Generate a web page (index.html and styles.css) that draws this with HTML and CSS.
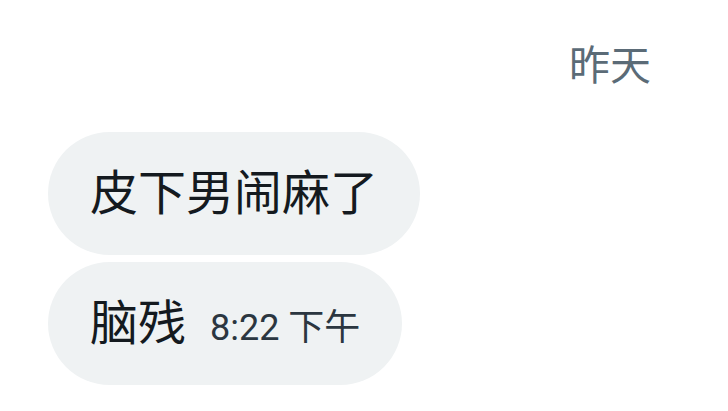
FILE: index.html
```html
<!DOCTYPE html>
<html>

<head>
    <title>聊天</title>
    <link rel="stylesheet" href="styles.css">
</head>

<body>
    <div class="chat">
        <div class="day">昨天</div>

        <div class="messages">
            <div class="bubble">
                <span class="text">皮下男闹麻了</span>
            </div>
            <div class="bubble">
                <span class="text">脑残</span>
                <span class="time">8:22 下午</span>
            </div>
        </div>
    </div>
</body>

</html>
```

FILE: styles.css
```css
body {
    margin: 0;
    background-color: #ffffff;
    font-family: Roboto, "Noto Sans CJK SC", sans-serif;
}

.chat {
    display: flex;
    flex-direction: column;
    padding: 40px 0 0 48px;
}

.day {
    align-self: flex-end;
    margin-right: 77px;
    font-size: 41px;
    line-height: 52px;
    color: #5b6b77;
}

.messages {
    display: flex;
    flex-direction: column;
    align-items: flex-start;
    gap: 7px;
    margin-top: 40px;
}

.bubble {
    display: flex;
    align-items: baseline;
    height: 123px;
    padding: 0 42px;
    box-sizing: border-box;
    border-radius: 62px;
    background-color: #eff2f3;
    line-height: 123px;
}

.text {
    font-size: 48px;
    color: #141a1f;
}

.time {
    margin-left: 24px;
    font-size: 36px;
    color: #2b3640;
}
```
